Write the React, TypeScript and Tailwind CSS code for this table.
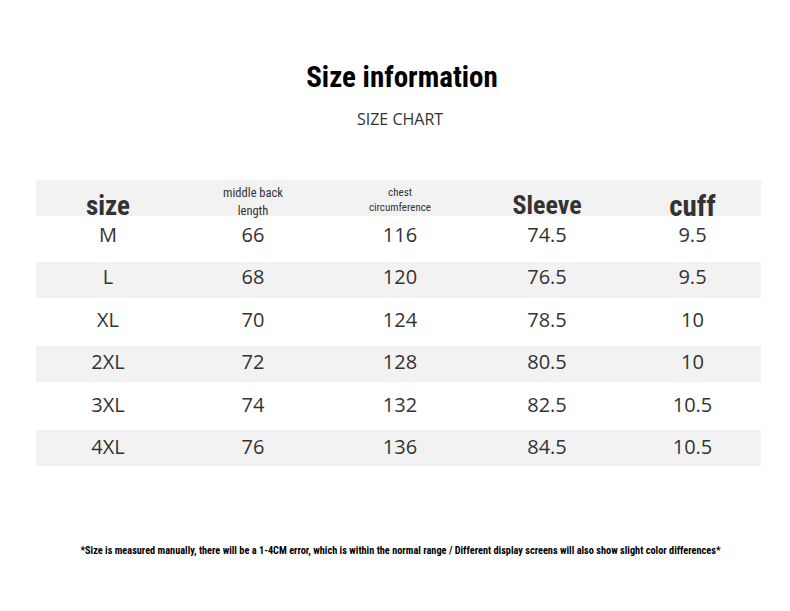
const condensed = {
  fontFamily: '"Roboto Condensed", "DejaVu Sans Condensed", "Liberation Sans Narrow", "Roboto", sans-serif',
};

type Row = {
  size: string;
  back: string;
  chest: string;
  sleeve: string;
  cuff: string;
  shaded: boolean;
  // nudge so the digits sit where the photo has them
  nudge: string;
  height: string;
};

const rows: Row[] = [
  {size: 'M', back: '66', chest: '116', sleeve: '74.5', cuff: '9.5', shaded: false, nudge: 'mt-[-8px]', height: 'h-[46px]'},
  {size: 'L', back: '68', chest: '120', sleeve: '76.5', cuff: '9.5', shaded: true, nudge: 'mt-[-6px]', height: 'h-[36px]'},
  {size: 'XL', back: '70', chest: '124', sleeve: '78.5', cuff: '10', shaded: false, nudge: 'mt-[-4px]', height: 'h-[48px]'},
  {size: '2XL', back: '72', chest: '128', sleeve: '80.5', cuff: '10', shaded: true, nudge: 'mt-[-4px]', height: 'h-[36px]'},
  {size: '3XL', back: '74', chest: '132', sleeve: '82.5', cuff: '10.5', shaded: false, nudge: 'mt-[-2px]', height: 'h-[48px]'},
  {size: '4XL', back: '76', chest: '136', sleeve: '84.5', cuff: '10.5', shaded: true, nudge: 'mt-[-2px]', height: 'h-[36px]'},
];

const cols = 'grid grid-cols-[144px_146px_148px_146px_141px]';

function HeaderRow() {
  return (
    <div className={`${cols} h-[36px] bg-[#f2f2f2] text-[#333]`} style={condensed}>
      <div className="flex justify-center items-end">
        <span className="text-[27px] font-bold leading-none mb-[0px]">size</span>
      </div>
      <div className="flex flex-col items-center justify-start pt-[4px]">
        <span className="text-[12.5px] leading-[18px]">middle back</span>
        <span className="text-[12.5px] leading-[18px]">length</span>
      </div>
      <div className="flex flex-col items-center justify-start pt-[5px]">
        <span className="text-[11px] leading-[15px]">chest</span>
        <span className="text-[11px] leading-[15px]">circumference</span>
      </div>
      <div className="flex justify-center items-end">
        <span className="text-[26px] font-bold leading-none mb-[2px]">Sleeve</span>
      </div>
      <div className="flex justify-center items-end pl-[4px]">
        <span className="text-[29px] font-bold leading-none mb-[-1px]">cuff</span>
      </div>
    </div>
  );
}

function DataRow({row}: {row: Row}) {
  return (
    <div
      className={
        row.shaded
          ? `${cols} items-center bg-[#f2f2f2] ${row.height}`
          : `${cols} items-center ${row.height}`
      }
    >
      {[row.size, row.back, row.chest, row.sleeve, row.cuff].map((value, i) => (
        <div key={i} className={i === 4 ? `text-center pl-[4px] ${row.nudge}` : `text-center ${row.nudge}`}>
          {value}
        </div>
      ))}
    </div>
  );
}

export default function App() {
  return (
    <div className="w-[790px] h-[611px] bg-white flex flex-col items-center overflow-hidden">
      <h1 className="mt-[60px] ml-[14px] text-[29px] leading-[34px] font-bold text-black" style={condensed}>
        Size information
      </h1>
      <div className="mt-[15px] ml-[10px] text-[16px] leading-[20px] text-[#333]" style={{fontFamily: '"Open Sans", sans-serif'}}>
        SIZE CHART
      </div>
      <div className="mt-[51px] self-start ml-[36px] w-[725px] text-[20px] text-[#333]" style={{fontFamily: '"Open Sans", sans-serif'}}>
        <HeaderRow />
        {rows.map((row) => (
          <DataRow key={row.size} row={row} />
        ))}
      </div>
      <div className="mt-[78px] ml-[11px] text-[10.3px] leading-[14px] font-bold text-black" style={condensed}>
        *Size is measured manually, there will be a 1-4CM error, which is within the normal range / Different display screens will also show slight color differences*
      </div>
    </div>
  );
}
